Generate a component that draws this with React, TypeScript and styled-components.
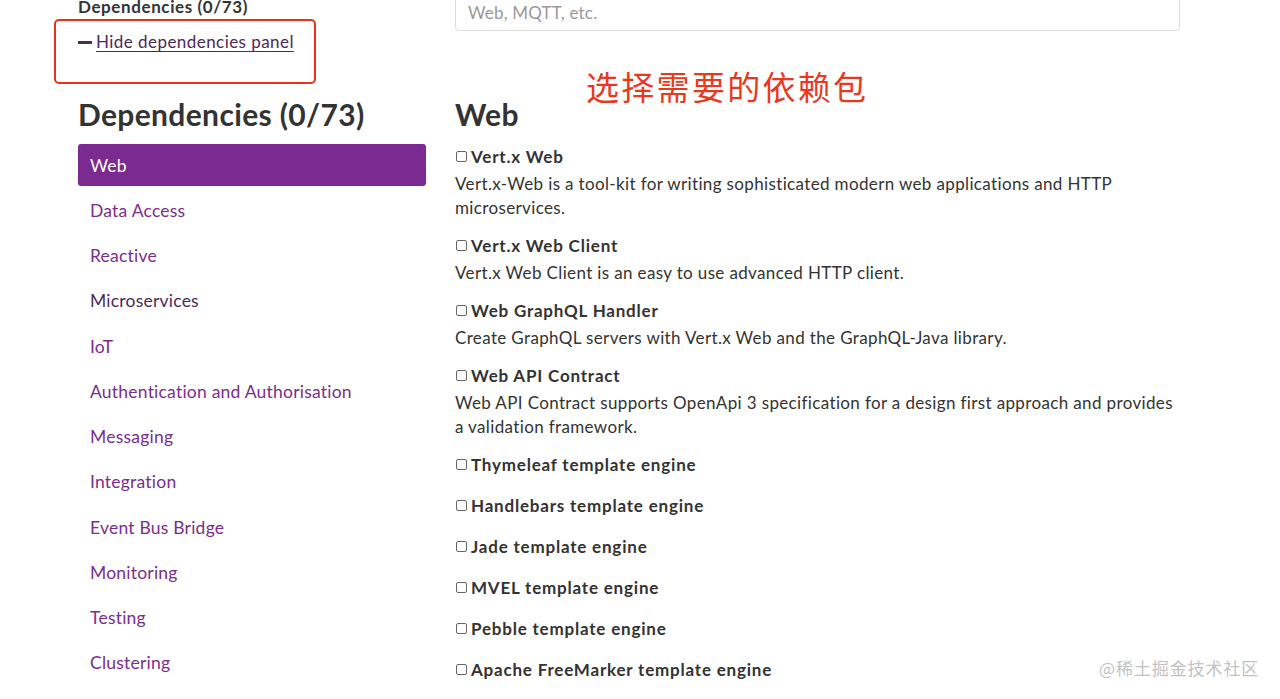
import React from "react";
import styled, { createGlobalStyle } from "styled-components";

const GlobalStyle = createGlobalStyle`
    html, body {
        margin: 0;
        padding: 0;
        background: #fff;
        overflow: hidden;
    }
    body {
        font-family: Lato, "Noto Sans", sans-serif;
        color: #333;
    }
`;

const Page = styled.div`
    position: relative;
    width: 1280px;
    height: 699px;
    overflow: hidden;
    display: flex;
    flex-direction: row;
    gap: 29px;
    padding-left: 78px;
    box-sizing: border-box;
`;

const Sidebar = styled.div`
    width: 348px;
    display: flex;
    flex-direction: column;
    flex-shrink: 0;
`;

const Main = styled.div`
    width: 725px;
    display: flex;
    flex-direction: column;
    flex-shrink: 0;
`;

const SmallTitle = styled.div`
    margin-top: -4px;
    font-size: 17px;
    font-weight: 700;
    letter-spacing: 0.6px;
    line-height: 22px;
    color: #333;
`;

const HideLink = styled.a`
    margin-top: 13px;
    display: flex;
    align-items: center;
    gap: 4px;
    font-size: 17px;
    letter-spacing: 0.45px;
    line-height: 22px;
    color: #4b2a5c;
    cursor: pointer;
`;

const Minus = styled.span`
    width: 14px;
    height: 3px;
    background: #4b2a5c;
`;

const LinkText = styled.span`
    text-decoration: underline;
    text-underline-offset: 3px;
`;

const Heading = styled.h2<{ $top: number }>`
    margin: ${(p) => p.$top}px 0 12px 0;
    font-size: 30px;
    font-weight: 700;
    letter-spacing: 0.35px;
    line-height: 36px;
    color: #333;
`;

const NavList = styled.div`
    display: flex;
    flex-direction: column;
`;

const NavItem = styled.a<{ $active?: boolean; $visited?: boolean }>`
    height: 42px;
    margin-bottom: 3.27px;
    padding: 0 12px;
    display: flex;
    align-items: center;
    border-radius: 3px;
    font-size: 17.5px;
    letter-spacing: 0.22px;
    color: ${(p) => (p.$active ? "#fff" : p.$visited ? "#4b2a5c" : "#7b2d8e")};
    background: ${(p) => (p.$active ? "#7b2a8f" : "transparent")};
    cursor: pointer;
`;

const Search = styled.input`
    margin-top: -7px;
    height: 38px;
    box-sizing: border-box;
    border: 1px solid #dcdcdc;
    border-radius: 4px;
    padding: 0 12px;
    font-family: Lato, "Noto Sans", sans-serif;
    font-size: 17px;
    letter-spacing: 0.2px;
    color: #333;
    &::placeholder {
        color: #9a9a9a;
    }
`;

const DepList = styled.div`
    display: flex;
    flex-direction: column;
`;

const Dep = styled.div<{ $hasDesc: boolean }>`
    margin-bottom: ${(p) => (p.$hasDesc ? 13 : 17)}px;
`;

const DepTitle = styled.label`
    display: flex;
    align-items: center;
    gap: 4px;
    height: 24px;
    font-size: 17px;
    font-weight: 700;
    letter-spacing: 0.8px;
    color: #333;
`;

const Box = styled.span`
    width: 11px;
    height: 11px;
    border: 1px solid #666;
    border-radius: 2px;
    box-sizing: border-box;
    margin-left: 1px;
`;

const DepDesc = styled.p`
    margin: 4px 0 0 0;
    font-size: 17px;
    letter-spacing: 0.36px;
    line-height: 24px;
    color: #333;
`;

const Annotation = styled.div`
    position: absolute;
    left: 54px;
    top: 19px;
    width: 262px;
    height: 65px;
    border: 2px solid #e8321e;
    border-radius: 5px;
    box-sizing: border-box;
`;

const Note = styled.div`
    position: absolute;
    left: 586px;
    top: 64px;
    font-family: "Noto Sans CJK SC", sans-serif;
    font-size: 33px;
    letter-spacing: 2.3px;
    line-height: 44px;
    color: #e8391f;
`;

const Watermark = styled.div`
    position: absolute;
    left: 1099px;
    top: 656px;
    font-family: "Noto Sans CJK SC", sans-serif;
    font-size: 17px;
    letter-spacing: 0.9px;
    line-height: 24px;
    color: #c2c2c2;
`;

const categories = [
    "Web",
    "Data Access",
    "Reactive",
    "Microservices",
    "IoT",
    "Authentication and Authorisation",
    "Messaging",
    "Integration",
    "Event Bus Bridge",
    "Monitoring",
    "Testing",
    "Clustering",
];

const deps = [
    { name: "Vert.x Web", desc: "Vert.x-Web is a tool-kit for writing sophisticated modern web applications and HTTP microservices." },
    { name: "Vert.x Web Client", desc: "Vert.x Web Client is an easy to use advanced HTTP client." },
    { name: "Web GraphQL Handler", desc: "Create GraphQL servers with Vert.x Web and the GraphQL-Java library." },
    { name: "Web API Contract", desc: "Web API Contract supports OpenApi 3 specification for a design first approach and provides a validation framework." },
    { name: "Thymeleaf template engine" },
    { name: "Handlebars template engine" },
    { name: "Jade template engine" },
    { name: "MVEL template engine" },
    { name: "Pebble template engine" },
    { name: "Apache FreeMarker template engine" },
];

const App = () => {
    return (
        <Page>
            <GlobalStyle />
            <Sidebar>
                <SmallTitle>Dependencies (0/73)</SmallTitle>
                <HideLink>
                    <Minus />
                    <LinkText>Hide dependencies panel</LinkText>
                </HideLink>
                <Heading $top={43}>Dependencies (0/73)</Heading>
                <NavList>
                    {categories.map((c, i) => (
                        <NavItem key={c} $active={i === 0} $visited={c === "Microservices"}>
                            {c}
                        </NavItem>
                    ))}
                </NavList>
            </Sidebar>

            <Main>
                <Search placeholder="Web, MQTT, etc." />
                <Heading $top={65}>Web</Heading>
                <DepList>
                    {deps.map((d) => (
                        <Dep key={d.name} $hasDesc={!!d.desc}>
                            <DepTitle>
                                <Box />
                                {d.name}
                            </DepTitle>
                            {d.desc && <DepDesc>{d.desc}</DepDesc>}
                        </Dep>
                    ))}
                </DepList>
            </Main>

            {/* annotations drawn over the screenshot */}
            <Annotation />
            <Note>选择需要的依赖包</Note>
            <Watermark>@稀土掘金技术社区</Watermark>
        </Page>
    );
};

export default App;
